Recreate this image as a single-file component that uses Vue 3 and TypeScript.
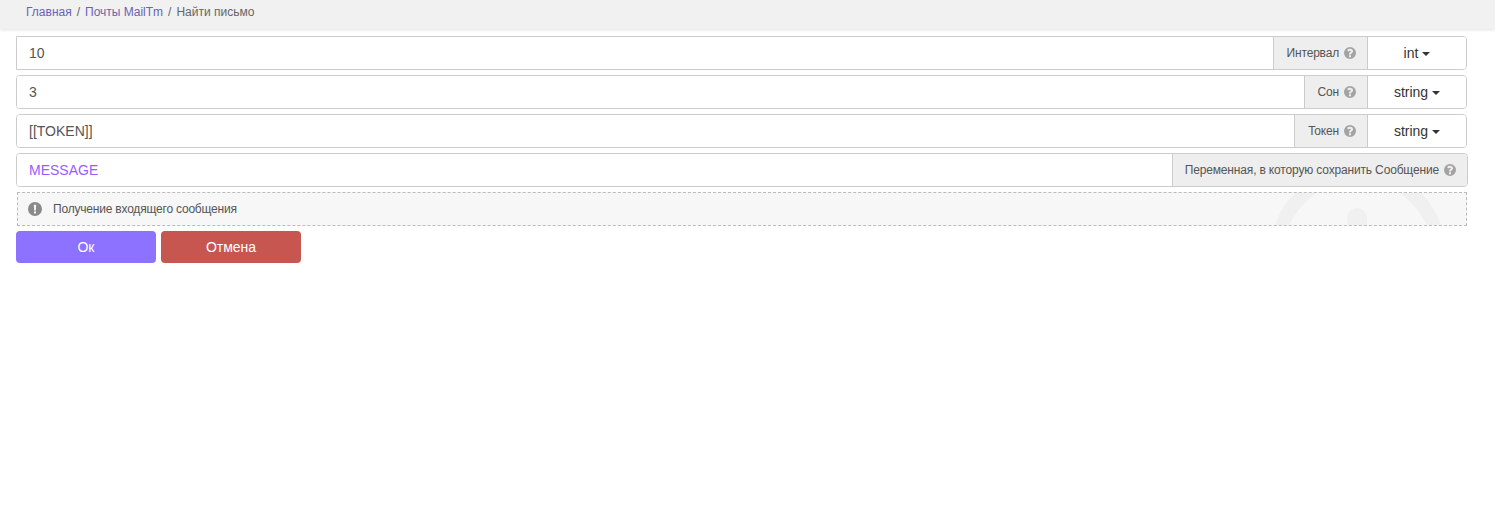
<script setup lang="ts">
interface Field {
  value: string;
  label: string;
  type?: string;
  tone: string;
}

const fields: Field[] = [
  { value: '10', label: 'Интервал', type: 'int', tone: 'plain' },
  { value: '3', label: 'Сон', type: 'string', tone: 'plain' },
  { value: '[[TOKEN]]', label: 'Токен', type: 'string', tone: 'plain' },
  { value: 'MESSAGE', label: 'Переменная, в которую сохранить Сообщение', tone: 'var' },
];
</script>

<template>
  <div class="page">
    <nav class="crumbs">
      <a class="crumb">Главная</a>
      <span class="sep">/</span>
      <a class="crumb">Почты MailTm</a>
      <span class="sep">/</span>
      <span class="current">Найти письмо</span>
    </nav>

    <div class="content">
      <div v-for="f in fields" :key="f.label" class="field" :class="{ wide: !f.type }">
        <div class="input" :class="f.tone">{{ f.value }}</div>
        <div class="addon">
          <span class="addon-text">{{ f.label }}</span>
          <svg class="help" viewBox="0 0 24 24" aria-hidden="true">
            <path
              fill-rule="evenodd"
              d="M12 0a12 12 0 1 0 0 24 12 12 0 0 0 0-24zm2 20.500h-4v-3.800h4zm3.700-10.300c-.4 1-1.300 1.700-2.200 2.400-.9.600-1.500 1.100-1.500 2.100v.4h-4v-.8c0-1.900 1-2.900 2.300-3.800.9-.6 1.500-1.100 1.500-1.800 0-.8-.7-1.300-1.700-1.300-1.100 0-2.100.6-3 1.600L6.300 6.500C7.800 4.700 9.700 3.700 12.200 3.700c3.300 0 5.800 1.800 5.800 4.700 0 .7-.1 1.300-.3 1.800z"
            />
          </svg>
        </div>
        <button v-if="f.type" class="type">{{ f.type }}<span class="caret"></span></button>
      </div>

      <div class="note">
        <svg class="watermark" viewBox="0 0 180 180" aria-hidden="true">
          <circle cx="90" cy="90" r="81.500" fill="none" stroke="#f0f0f0" stroke-width="14" />
          <rect x="79" y="43" width="20" height="70" rx="10" fill="#f0f0f0" />
        </svg>
        <svg class="note-icon" viewBox="0 0 24 24" aria-hidden="true">
          <path
            fill-rule="evenodd"
            d="M12 0a12 12 0 1 0 0 24 12 12 0 0 0 0-24zm-2 4.500h4l-.5 10h-3zM12 16a2 2 0 1 1 0 4 2 2 0 0 1 0-4z"
          />
        </svg>
        <span class="note-text">Получение входящего сообщения</span>
      </div>

      <div class="actions">
        <button class="btn ok">Ок</button>
        <button class="btn cancel">Отмена</button>
      </div>
    </div>
  </div>
</template>

<style>
html,
body {
  background: #fff;
}
</style>

<style scoped>
.page {
  font-family: "Liberation Sans", Arial, sans-serif;
  font-size: 12px;
  color: #555;
}

.crumbs {
  height: 29px;
  box-sizing: border-box;
  padding: 5px 26px 0;
  display: flex;
  gap: 5px;
  line-height: 14px;
  background: #f1f1f1;
  box-shadow: 0 1px 3px rgba(0, 0, 0, 0.12);
}

.crumb {
  color: #6a63b5;
}

.sep,
.current {
  color: #666;
}

.content {
  padding: 7px 28px 0 16px;
  display: flex;
  flex-direction: column;
  gap: 5px;
}

.field {
  display: flex;
  height: 34px;
  box-sizing: border-box;
  border: 1px solid #ccc;
  border-radius: 4px;
  overflow: hidden;
}

/* first row has square corners on the left in the original */
.field:first-child {
  border-radius: 0 4px 4px 0;
}

.field.wide {
  margin-right: -1px;
}

.input {
  flex: 1;
  padding: 0 12px;
  font-size: 14px;
  line-height: 32px;
  background: #fff;
}

.input.var {
  color: #9a5cff;
}

.addon {
  display: flex;
  align-items: center;
  gap: 5px;
  padding: 0 11px 0 13px;
  border-left: 1px solid #ccc;
  background: #eee;
  white-space: nowrap;
}

.wide .addon {
  padding-left: 12px;
}

.addon-text,
.note-text {
  letter-spacing: -0.18px;
}

.wide .addon-text {
  letter-spacing: -0.16px;
}

.help {
  width: 12px;
  height: 12px;
  fill: #a3a3a3;
}

.type {
  width: 99px;
  border: 0;
  border-left: 1px solid #ccc;
  background: #fff;
  color: #333;
  font: 14px "Liberation Sans", Arial, sans-serif;
  padding: 0;
}

.caret {
  display: inline-block;
  margin-left: 4px;
  vertical-align: middle;
  border-top: 4px solid #333;
  border-left: 4px solid transparent;
  border-right: 4px solid transparent;
}

.note {
  position: relative;
  height: 34px;
  margin-left: 1px;
  box-sizing: border-box;
  border: 1px dashed #bbb;
  display: flex;
  align-items: center;
  gap: 11px;
  padding-left: 10px;
  background: #f7f7f7;
  overflow: hidden;
}

.note-text {
  position: relative;
  letter-spacing: -0.2px;
}

.note-icon {
  width: 14px;
  height: 14px;
  fill: #8a8a8a;
  position: relative;
}

.watermark {
  position: absolute;
  right: 18px;
  top: -28px;
  width: 180px;
  height: 180px;
}

.actions {
  display: flex;
  gap: 5px;
}

.btn {
  width: 140px;
  height: 32px;
  border: 0;
  border-radius: 4px;
  color: #fff;
  font: 14px "Liberation Sans", Arial, sans-serif;
}

.ok {
  background: #8c72ff;
}

.cancel {
  background: #c75650;
}
</style>
